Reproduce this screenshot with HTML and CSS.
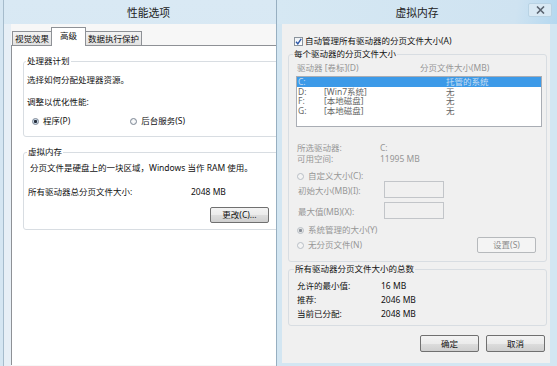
FILE: index.html
```html
<!DOCTYPE html>
<html lang="zh-CN">
<head>
    <meta charset="UTF-8">
    <title>性能选项 - 虚拟内存</title>
    <link rel="stylesheet" href="styles.css">
</head>
<body>
    <div class="desktop">
        <!-- 性能选项 (被右边的窗口挡住一部分) -->
        <div class="left-wrap">
            <div class="win win-left">
                <div class="titlebar">性能选项</div>
                <div class="frame">
                    <div class="body">
                        <div class="tabs">
                            <div class="tab tab-1">视觉效果</div>
                            <div class="tab tab-2 active">高级</div>
                            <div class="tab tab-3">数据执行保护</div>
                        </div>
                        <div class="panel">
                            <fieldset class="group group-cpu">
                                <legend>处理器计划</legend>
                                <div class="line cpu-desc">选择如何分配处理器资源。</div>
                                <div class="line cpu-adjust">调整以优化性能:</div>
                                <div class="line cpu-radios">
                                    <span class="radio checked"></span><span class="radio-label">程序(P)</span>
                                    <span class="radio radio-2"></span><span class="radio-label">后台服务(S)</span>
                                </div>
                            </fieldset>
                            <fieldset class="group group-vm">
                                <legend>虚拟内存</legend>
                                <div class="line vm-desc">分页文件是硬盘上的一块区域，Windows 当作 RAM 使用。</div>
                                <div class="line vm-total"><span class="vm-total-label">所有驱动器总分页文件大小:</span><span>2048 MB</span></div>
                                <button class="btn btn-change">更改(C)...</button>
                            </fieldset>
                        </div>
                    </div>
                </div>
            </div>
        </div>

        <!-- 虚拟内存 -->
        <div class="win win-right">
            <div class="titlebar">
                虚拟内存
                <span class="close">
                    <svg width="9" height="8" viewBox="0 0 9 8"><path d="M1 0.5 L8 7.5 M8 0.5 L1 7.5" stroke="#5a6470" stroke-width="1.6"/></svg>
                </span>
            </div>
            <div class="frame">
                <div class="body">
                    <div class="line auto-row">
                        <span class="checkbox">
                            <svg width="7" height="7" viewBox="0 0 7 7"><path d="M1 3.8 L2.8 5.8 L6.2 0.8" fill="none" stroke="#2e58a8" stroke-width="1.4"/></svg>
                        </span>
                        <span>自动管理所有驱动器的分页文件大小(A)</span>
                    </div>

                    <fieldset class="group group-drives">
                        <legend>每个驱动器的分页文件大小</legend>
                        <div class="line drive-head disabled">
                            <span>驱动器 [卷标](D)</span>
                            <span>分页文件大小(MB)</span>
                        </div>
                        <div class="listbox">
                            <div class="drive selected"><span>C:</span><span></span><span>托管的系统</span></div>
                            <div class="drive"><span>D:</span><span>[Win7系统]</span><span>无</span></div>
                            <div class="drive"><span>F:</span><span>[本地磁盘]</span><span>无</span></div>
                            <div class="drive"><span>G:</span><span>[本地磁盘]</span><span>无</span></div>
                        </div>
                        <div class="selinfo disabled">
                            <span>所选驱动器:</span><span>C:</span>
                            <span>可用空间:</span><span>11995 MB</span>
                        </div>
                        <div class="line opt-custom disabled">
                            <span class="radio off"></span><span class="radio-label">自定义大小(C):</span>
                        </div>
                        <div class="size-row disabled">
                            <span class="size-label">初始大小(MB)(I):</span>
                            <span class="textbox"></span>
                        </div>
                        <div class="size-row size-row-2 disabled">
                            <span class="size-label">最大值(MB)(X):</span>
                            <span class="textbox"></span>
                        </div>
                        <div class="line opt-system disabled">
                            <span class="radio checked off"></span><span class="radio-label">系统管理的大小(Y)</span>
                        </div>
                        <div class="last-row disabled">
                            <span class="line"><span class="radio off"></span><span class="radio-label">无分页文件(N)</span></span>
                            <button class="btn btn-set" disabled>设置(S)</button>
                        </div>
                    </fieldset>

                    <fieldset class="group group-sum">
                        <legend>所有驱动器分页文件大小的总数</legend>
                        <div class="sum-grid">
                            <span>允许的最小值:</span><span>16 MB</span>
                            <span>推荐:</span><span>2046 MB</span>
                            <span>当前已分配:</span><span>2048 MB</span>
                        </div>
                    </fieldset>

                    <div class="actions">
                        <button class="btn">确定</button>
                        <button class="btn">取消</button>
                    </div>
                </div>
            </div>
        </div>
    </div>
</body>
</html>
```

FILE: styles.css
```css
* {
    box-sizing: border-box;
}

body {
    margin: 0;
    font-family: "Noto Sans", "Noto Sans CJK SC", sans-serif;
    font-size: 8.5px;
    color: #111;
    background: #d5e6f2;
}

.desktop {
    display: flex;
    width: 557px;
    height: 366px;
    overflow: hidden;
}

.line {
    display: flex;
    align-items: center;
    height: 10px;
    line-height: 10px;
    white-space: nowrap;
}

.disabled,
.disabled .radio-label {
    color: #969696;
}

/* ---------- 窗口 ---------- */

.left-wrap {
    flex: none;
    width: 276px;
    height: 366px;
    overflow: hidden;
}

.win {
    height: 366px;
    background: linear-gradient(180deg, #d9e9f4, #cfe2f0);
}

.titlebar {
    position: relative;
    height: 24px;
    line-height: 26px;
    text-align: center;
    font-size: 10.8px;
    color: #222;
}

.win-left {
    width: 290px;
    margin-left: 3px;
    border-left: 1px solid #a6bccc;
}

.win-left .frame {
    height: 342px;
    padding-left: 7px;
    background: #e7eff6;
}

.win-left .body {
    height: 100%;
    padding-top: 3px;
    background: #f7f7f7;
}

.win-right {
    flex: none;
    width: 281px;
    border-left: 1px solid #97afc1;
    background: linear-gradient(100deg, #d6e8f3 0%, #cfe3f1 70%, #a9d3ef 88%, #cfe3f1 96%);
}

.win-right .frame {
    height: 342px;
    padding: 0 7px 3px 5px;
    background: #d3e6f2;
}

.win-right .body {
    height: 100%;
    padding-top: 12px;
    background: #f0f0f0;
}

.close {
    position: absolute;
    right: 5px;
    top: 3px;
    width: 24px;
    height: 14px;
    display: flex;
    align-items: center;
    justify-content: center;
    border: 1px solid #b9d3e4;
    border-radius: 2px;
    background: #d9e9f4;
}

.close svg {
    display: block;
}

/* ---------- 选项卡 ---------- */

.tabs {
    display: flex;
    align-items: flex-end;
    height: 18px;
    padding-left: 1px;
}

.tab {
    position: relative;
    height: 14px;
    line-height: 13px;
    text-align: center;
    border: 1px solid #8e9196;
    border-bottom: none;
    background: linear-gradient(180deg, #f3f3f3, #e2e2e2);
}

.tab-1 {
    width: 40px;
}

.tab-2 {
    width: 35px;
    margin-left: -1px;
}

.tab-3 {
    width: 57px;
    margin-left: -1px;
}

.tab.active {
    z-index: 1;
    height: 19px;
    margin-bottom: -1px;
    line-height: 15px;
    background: #fff;
}

.panel {
    height: 320px;
    border: 1px solid #8e9196;
    border-bottom: none;
    background: #fff;
}

/* ---------- 分组框 ---------- */

.group {
    margin: 0;
    padding: 0;
    border: 1px solid #d8dde2;
    border-radius: 3px;
    min-width: 0;
}

.group legend {
    padding: 0 1px;
    line-height: 10px;
    white-space: nowrap;
}

.group-cpu {
    width: 300px;
    margin: 10px 0 0 11px;
    padding: 0 0 10px 3px;
}

.group-cpu legend {
    margin-left: -1px;
}

.cpu-desc {
    margin-top: 9px;
}

.cpu-adjust {
    margin-top: 12px;
}

.cpu-radios {
    margin-top: 9px;
    padding-left: 5px;
}

.cpu-radios .radio-2 {
    margin-left: 60px;
}

.group-vm {
    width: 300px;
    margin: 10px 0 0 11px;
    padding: 0 0 6px 4px;
}

.group-vm legend {
    margin-left: -1px;
}

.vm-desc {
    margin-top: 6px;
    padding-left: 2px;
}

.vm-total {
    margin-top: 14px;
}

.vm-total-label {
    width: 163px;
}

.btn-change {
    margin: 10px 0 0 182px;
}

/* ---------- 单选 / 复选 ---------- */

.radio {
    flex: none;
    width: 7px;
    height: 7px;
    border: 1px solid #7b8592;
    border-radius: 50%;
    background: radial-gradient(circle, #fff 0, #e4e8ec 100%);
}

.radio.checked {
    background: radial-gradient(circle, #262e3a 0, #262e3a 1.3px, #c3d6e8 1.8px, #eef2f6 100%);
}

.radio.off {
    border-color: #b8bfc6;
    background: #f4f4f4;
}

.radio.checked.off {
    background: radial-gradient(circle, #8a9099 0, #8a9099 1.3px, #e4e4e4 1.8px, #f4f4f4 100%);
}

.radio-label {
    margin-left: 4px;
}

.checkbox {
    flex: none;
    display: flex;
    align-items: center;
    justify-content: center;
    width: 9px;
    height: 9px;
    margin-right: 2px;
    border: 1px solid #8a939c;
    background: linear-gradient(180deg, #eef1f4, #fff);
}

.checkbox svg {
    display: block;
}

/* ---------- 按钮 ---------- */

.btn {
    display: block;
    width: 59px;
    height: 16px;
    padding: 0;
    font: inherit;
    color: #111;
    line-height: 14px;
    border: 1px solid #707070;
    border-radius: 2px;
    background: linear-gradient(180deg, #f3f3f3 0%, #ebebeb 50%, #dddddd 51%, #cfcfcf 100%);
}

.btn:disabled {
    color: #8d8d8d;
    border-color: #b6b9bc;
    background: #f4f4f4;
}

/* ---------- 虚拟内存窗口 ---------- */

.auto-row {
    margin-left: 12px;
}

.group-drives {
    margin: 3px 3px 0 6px;
    padding: 0 4px 8px 7px;
}

.group-drives legend,
.group-sum legend {
    margin-left: -3px;
}

.drive-head {
    display: grid;
    grid-template-columns: 123px auto;
    margin-top: 4px;
    padding-left: 1px;
}

.listbox {
    width: 246px;
    height: 51px;
    margin-top: 3px;
    border: 1px solid #a9adb4;
    background: #fff;
}

.drive {
    display: grid;
    grid-template-columns: 26px 122px auto;
    height: 9.7px;
    line-height: 9.7px;
    padding-left: 1px;
    color: #666;
}

.drive.selected {
    background: #3c9ae8;
    color: #c9def2;
}

.selinfo {
    display: grid;
    grid-template-columns: 83px auto;
    margin-top: 16px;
    padding-left: 1px;
    line-height: 10.5px;
}

.opt-custom {
    margin-top: 7px;
    padding-left: 1px;
}

.size-row {
    display: flex;
    align-items: center;
    height: 17px;
}

.size-row-2 {
    margin-top: 4px;
}

.size-label {
    width: 88px;
    padding-left: 2px;
}

.textbox {
    width: 60px;
    height: 17px;
    border: 1px solid #c2c5c9;
    background: #f0f0f0;
}

.opt-system {
    margin-top: 6px;
    padding-left: 1px;
}

.last-row {
    display: flex;
    align-items: center;
    justify-content: space-between;
    margin-top: 2px;
    padding: 0 6px 0 1px;
}

.group-sum {
    margin: 2px 3px 0 6px;
    padding: 0 4px 4px 8px;
}

.sum-grid {
    display: grid;
    grid-template-columns: 84px auto;
    margin-top: 5px;
    line-height: 14px;
}

.actions {
    display: flex;
    justify-content: flex-end;
    gap: 7px;
    margin-top: 9px;
    padding-right: 5px;
}

.actions .btn {
    height: 17px;
}
```
